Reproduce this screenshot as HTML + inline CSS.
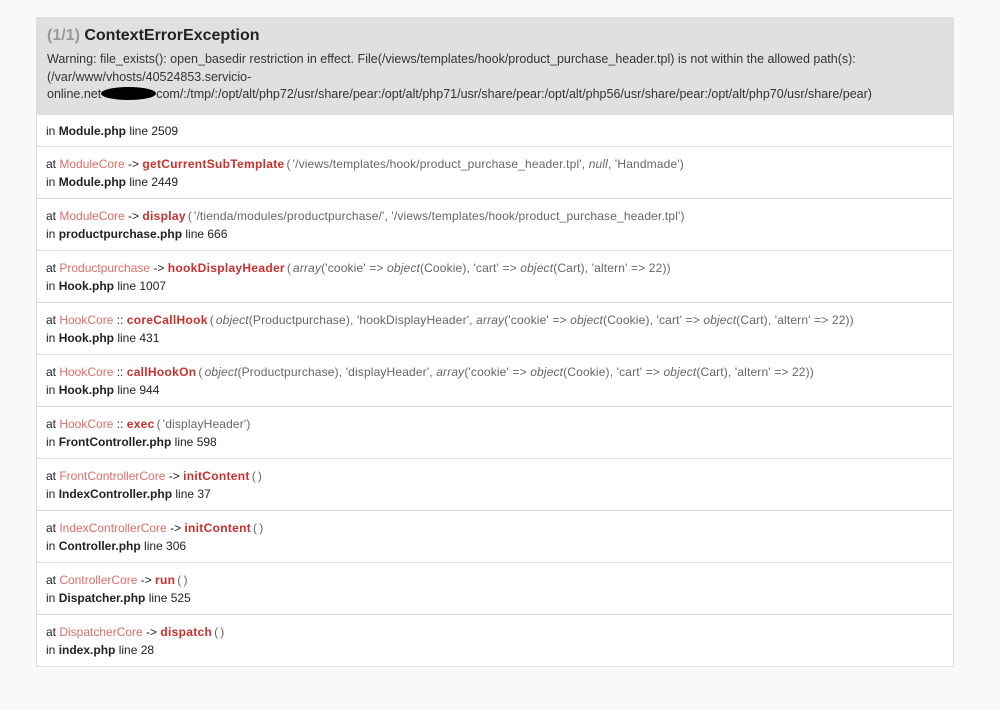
<!DOCTYPE html>
<html><head><style>
body{margin:0;background:#f9f9f9;font-family:"Liberation Sans",Arial,sans-serif;font-size:12px;color:#222;}
.box{position:absolute;left:36px;top:17px;width:916px;border:1px solid #ddd;background:#fff;}
.hd{background:#e0e0e0;padding:8px 10px 10px 10px;height:78px;position:relative;}
.hd h1{margin:0;font-size:16px;line-height:20px;font-weight:bold;color:#222;}
.hd h1 span{color:#999;font-weight:bold;}
.hd p{margin:5px 0 0;line-height:17.5px;color:#333;font-size:12.5px;}
.blob{display:inline-block;width:55px;height:13px;background:#000;border-radius:50%;vertical-align:-2px;}
.row{border-top:1px solid #ddd;padding:8px 9px;line-height:18px;height:35px;color:#222;}
.row.first{height:17px;padding:7px 9px 7px;}
.c{color:#d9534f;opacity:.85;}
.m{color:#c9302c;font-weight:bold;letter-spacing:.3px;}
.a{color:#666;letter-spacing:.15px;}
.a i{font-style:italic;}
.p{padding:0 2px;}
b{color:#222;}
</style></head><body>
<div class="box">
<div class="hd"><h1><span>(1/1)</span> ContextErrorException</h1>
<p>Warning: file_exists(): open_basedir restriction in effect. File(/views/templates/hook/product_purchase_header.tpl) is not within the allowed path(s):<br>(/var/www/vhosts/40524853.servicio-<br>online.net<span class="blob"></span>com/:/tmp/:/opt/alt/php72/usr/share/pear:/opt/alt/php71/usr/share/pear:/opt/alt/php56/usr/share/pear:/opt/alt/php70/usr/share/pear)</p>
</div>
<div class="row first">in <b>Module.php</b> line 2509</div>
<div class="row">at <span class="c">ModuleCore</span> -&gt; <span class="m">getCurrentSubTemplate</span><span class="a"><span class="p">(</span>'/views/templates/hook/product_purchase_header.tpl', <i>null</i>, 'Handmade')</span><br>in <b>Module.php</b> line 2449</div>
<div class="row">at <span class="c">ModuleCore</span> -&gt; <span class="m">display</span><span class="a"><span class="p">(</span>'/tienda/modules/productpurchase/', '/views/templates/hook/product_purchase_header.tpl')</span><br>in <b>productpurchase.php</b> line 666</div>
<div class="row">at <span class="c">Productpurchase</span> -&gt; <span class="m">hookDisplayHeader</span><span class="a"><span class="p">(</span><i>array</i>('cookie' =&gt; <i>object</i>(Cookie), 'cart' =&gt; <i>object</i>(Cart), 'altern' =&gt; 22))</span><br>in <b>Hook.php</b> line 1007</div>
<div class="row">at <span class="c">HookCore</span> :: <span class="m">coreCallHook</span><span class="a"><span class="p">(</span><i>object</i>(Productpurchase), 'hookDisplayHeader', <i>array</i>('cookie' =&gt; <i>object</i>(Cookie), 'cart' =&gt; <i>object</i>(Cart), 'altern' =&gt; 22))</span><br>in <b>Hook.php</b> line 431</div>
<div class="row">at <span class="c">HookCore</span> :: <span class="m">callHookOn</span><span class="a"><span class="p">(</span><i>object</i>(Productpurchase), 'displayHeader', <i>array</i>('cookie' =&gt; <i>object</i>(Cookie), 'cart' =&gt; <i>object</i>(Cart), 'altern' =&gt; 22))</span><br>in <b>Hook.php</b> line 944</div>
<div class="row">at <span class="c">HookCore</span> :: <span class="m">exec</span><span class="a"><span class="p">(</span>'displayHeader')</span><br>in <b>FrontController.php</b> line 598</div>
<div class="row">at <span class="c">FrontControllerCore</span> -&gt; <span class="m">initContent</span><span class="a"><span class="p">(</span>)</span><br>in <b>IndexController.php</b> line 37</div>
<div class="row">at <span class="c">IndexControllerCore</span> -&gt; <span class="m">initContent</span><span class="a"><span class="p">(</span>)</span><br>in <b>Controller.php</b> line 306</div>
<div class="row">at <span class="c">ControllerCore</span> -&gt; <span class="m">run</span><span class="a"><span class="p">(</span>)</span><br>in <b>Dispatcher.php</b> line 525</div>
<div class="row">at <span class="c">DispatcherCore</span> -&gt; <span class="m">dispatch</span><span class="a"><span class="p">(</span>)</span><br>in <b>index.php</b> line 28</div>
</div>
</body></html>
